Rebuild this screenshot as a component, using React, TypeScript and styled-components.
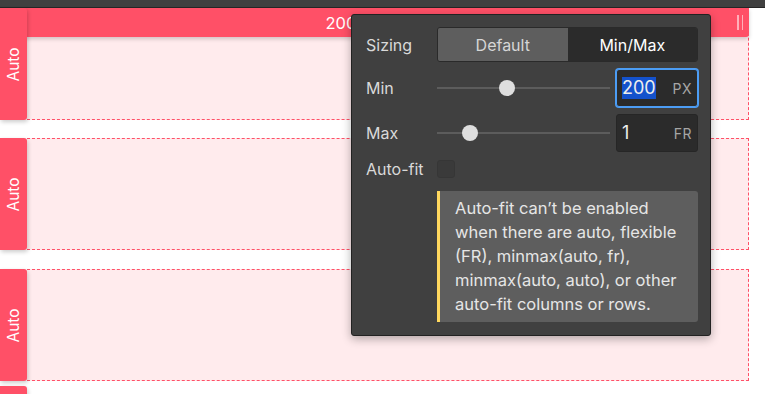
import React from "react";
import styled, { createGlobalStyle } from "styled-components";

const Global = createGlobalStyle`
  html, body { margin: 0; padding: 0; background: #ffffff; }
  body { font-family: Inter, "Noto Sans", sans-serif; overflow: hidden; }
  * { box-sizing: border-box; }
`;

const RED = "#ff5067";

const Page = styled.div`
  width: 765px;
  height: 394px;
  overflow: hidden;
  position: relative;
`;

const TopBar = styled.div`
  height: 8px;
  background: #404040;
  border-bottom: 1px solid #262626;
`;

const Canvas = styled.div`
  position: relative;
  display: flex;
  flex-direction: column;
  padding-right: 16px;
`;

const ColumnHeader = styled.div`
  position: absolute;
  top: 0;
  left: 0;
  right: 16px;
  height: 29px;
  padding-right: 12px;
  background: ${RED};
  border-radius: 0 0 3px 0;
  box-shadow: 0 2px 4px rgba(0, 0, 0, 0.18);
  color: #fff;
  font-size: 16.5px;
  display: flex;
  align-items: center;
  justify-content: center;
  z-index: 1;
`;

const Grip = styled.div`
  position: absolute;
  right: 6px;
  top: 7px;
  display: flex;
  gap: 3px;
  & > span {
    width: 1.5px;
    height: 15px;
    background: rgba(255, 255, 255, 0.55);
  }
`;

const Row = styled.div<{ $mt: number; $h: number }>`
  display: flex;
  height: ${(p) => p.$h}px;
  margin-top: ${(p) => p.$mt}px;
  flex-shrink: 0;
`;

const Tab = styled.div`
  width: 27px;
  flex-shrink: 0;
  background: ${RED};
  border-radius: 0 3px 3px 0;
  box-shadow: 1px 2px 4px rgba(0, 0, 0, 0.2);
  display: flex;
  align-items: center;
  justify-content: center;
  position: relative;
  z-index: 2;
`;

const TabLabel = styled.span`
  color: #fff;
  font-size: 15.5px;
  transform: rotate(-90deg);
  white-space: nowrap;
`;

const Area = styled.div<{ $hidden?: boolean }>`
  flex: 1;
  background: ${(p) => (p.$hidden ? "transparent" : "#ffebed")};
  border-top: 1px dashed ${(p) => (p.$hidden ? "transparent" : RED)};
  border-bottom: 1px dashed ${(p) => (p.$hidden ? "transparent" : RED)};
  border-right: 1px dashed ${(p) => (p.$hidden ? "transparent" : RED)};
`;

const Popup = styled.div`
  position: absolute;
  left: 351px;
  top: 14px;
  width: 360px;
  height: 322px;
  background: #404040;
  border: 1px solid #222;
  border-radius: 3px;
  box-shadow: 0 3px 10px rgba(0, 0, 0, 0.3);
  padding: 12px 12px 14px 14px;
  display: grid;
  grid-template-columns: 71px 1fr;
  grid-auto-rows: auto;
  align-items: center;
  z-index: 5;
  color: #d9d9d9;
  font-size: 16px;
`;

const Label = styled.div<{ $mt?: number }>`
  color: #d9d9d9;
  font-size: 16px;
  margin-top: ${(p) => p.$mt ?? 0}px;
`;

const Segmented = styled.div`
  display: grid;
  grid-template-columns: 1fr 1fr;
  height: 35px;
  border: 1px solid #2a2a2a;
  border-radius: 3px;
  overflow: hidden;
`;

const SegButton = styled.div<{ $active?: boolean }>`
  display: flex;
  align-items: center;
  justify-content: center;
  background: ${(p) => (p.$active ? "#2b2b2b" : "#5e5e5e")};
  color: ${(p) => (p.$active ? "#ffffff" : "#d6d6d6")};
  font-size: 16px;
`;

const Control = styled.div<{ $mt: number }>`
  display: flex;
  align-items: center;
  gap: 6px;
  margin-top: ${(p) => p.$mt}px;
`;

const Slider = styled.div`
  flex: 1;
  height: 16px;
  position: relative;
  display: flex;
  align-items: center;
`;

const Track = styled.div`
  width: 100%;
  height: 2px;
  background: #5c5c5c;
`;

const Thumb = styled.div`
  position: absolute;
  top: 0;
  width: 16px;
  height: 16px;
  border-radius: 50%;
  background: #dedede;
  transform: translateX(-50%);
`;

const NumberBox = styled.div<{ $focus?: boolean }>`
  width: 82px;
  height: 38px;
  flex-shrink: 0;
  background: #2b2b2b;
  border: 1px solid ${(p) => (p.$focus ? "#4c9df5" : "#262626")};
  box-shadow: ${(p) => (p.$focus ? "0 0 0 1px #4c9df5" : "none")};
  border-radius: 3px;
  display: flex;
  align-items: center;
  justify-content: space-between;
  padding: 0 5px 0 5px;
`;

const Value = styled.span<{ $selected?: boolean }>`
  font-size: 18px;
  color: #ededed;
  background: ${(p) => (p.$selected ? "#1452cc" : "transparent")};
  line-height: 22px;
`;

const Unit = styled.span`
  font-size: 14px;
  color: #a6a6a6;
  letter-spacing: 0.5px;
`;

const Check = styled.div`
  width: 18px;
  height: 18px;
  border-radius: 3px;
  background: #3a3a3a;
  border: 1px solid #363636;
  margin-top: 7px;
`;

const Note = styled.div`
  grid-column: 2;
  margin-top: 12px;
  background: #5e5e5e;
  border-left: 3px solid #ffd85e;
  border-radius: 0 3px 3px 0;
  padding: 5px 12px 6px 15px;
  color: #e6e6e6;
  font-size: 16.5px;
  line-height: 24px;
`;

const rows = [
  { mt: 0, h: 112, hidden: false },
  { mt: 18, h: 112, hidden: false },
  { mt: 19, h: 112, hidden: false },
  { mt: 5, h: 112, hidden: true },
];

export default function App() {
  const minPos = 70 / 172;
  const maxPos = 33 / 172;
  return (
    <Page>
      <Global />
      <TopBar />
      <Canvas>
        <ColumnHeader>
          200px – 1fr
          <Grip>
            <span />
            <span />
          </Grip>
        </ColumnHeader>
        {rows.map((r, i) => (
          <Row key={i} $mt={r.mt} $h={r.h}>
            <Tab>
              <TabLabel>Auto</TabLabel>
            </Tab>
            <Area $hidden={r.hidden} />
          </Row>
        ))}
      </Canvas>
      <Popup>
        <Label>Sizing</Label>
        <Segmented>
          <SegButton>Default</SegButton>
          <SegButton $active>Min/Max</SegButton>
        </Segmented>
        <Label $mt={7}>Min</Label>
        <Control $mt={7}>
          <Slider>
            <Track />
            <Thumb style={{ left: `${minPos * 100}%` }} />
          </Slider>
          <NumberBox $focus>
            <Value $selected>200</Value>
            <Unit>PX</Unit>
          </NumberBox>
        </Control>
        <Label $mt={7}>Max</Label>
        <Control $mt={7}>
          <Slider>
            <Track />
            <Thumb style={{ left: `${maxPos * 100}%` }} />
          </Slider>
          <NumberBox>
            <Value>1</Value>
            <Unit>FR</Unit>
          </NumberBox>
        </Control>
        <Label $mt={7}>Auto-fit</Label>
        <Check />
        <Note>
          Auto-fit can’t be enabled when there are auto, flexible (FR),
          minmax(auto, fr), minmax(auto, auto), or other auto-fit columns or
          rows.
        </Note>
      </Popup>
    </Page>
  );
}
